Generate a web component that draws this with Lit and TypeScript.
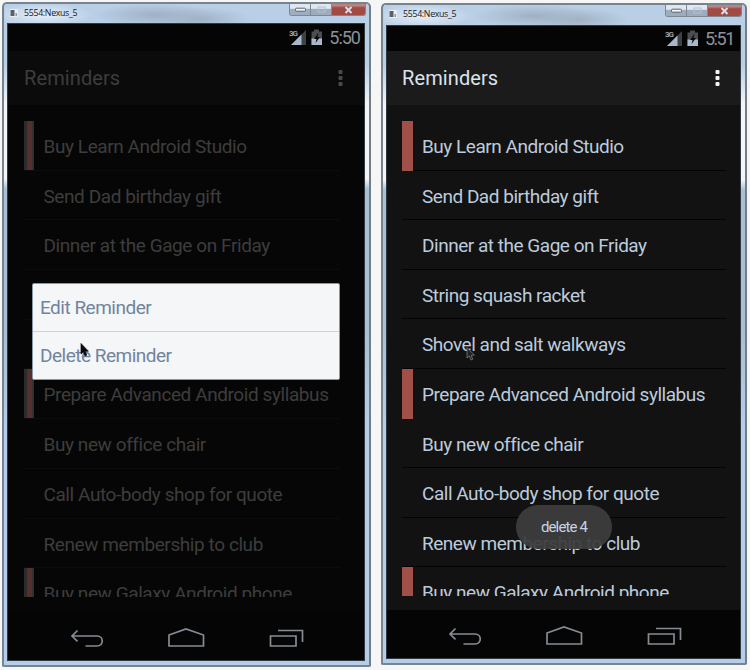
import { LitElement, html, css, svg } from "lit";
import { customElement, property } from "lit/decorators.js";
import { classMap } from "lit/directives/class-map.js";

interface Reminder {
  text: string;
  important?: boolean;
}

const REMINDERS: Reminder[] = [
  { text: "Buy Learn Android Studio", important: true },
  { text: "Send Dad birthday gift" },
  { text: "Dinner at the Gage on Friday" },
  { text: "String squash racket" },
  { text: "Shovel and salt walkways" },
  { text: "Prepare Advanced Android syllabus", important: true },
  { text: "Buy new office chair" },
  { text: "Call Auto-body shop for quote" },
  { text: "Renew membership to club" },
  { text: "Buy new Galaxy Android phone", important: true },
];

const pointer = (fill: string, stroke: string) => svg`
  <path d="M1 0.5 L1 11 L3.4 9 L5 13 L6.8 12.2 L5.2 8.4 L8.4 8.2 Z"
    fill=${fill} stroke=${stroke} stroke-width="0.7" />`;

@customElement("emulator-window")
export class EmulatorWindow extends LitElement {
  @property() time = "";
  @property({ type: Boolean, reflect: true }) dimmed = false;

  static styles = css`
    :host {
      display: flex;
      flex-direction: column;
      box-sizing: border-box;
      width: 369px;
      height: 665px;
      border: 2px solid #77838f;
      border-right-color: #737d88;
      border-radius: 5px 5px 2px 2px;
      padding: 0 4px 4px 3px;
      background: linear-gradient(#b9cfe6 0 60px, #f4f5f7 100px 175px, #a9bfd6 185px 330px, #b4cde8 420px);
      font-family: Roboto, "Liberation Sans", sans-serif;
      position: relative;
    }
    :host(:not([dimmed])) {
      width: 366px;
      height: 662px;
    }
    .titlebar {
      display: flex;
      height: 19px;
      flex: none;
      margin: 0 -3px 0 -2px;
      padding-left: 5px;
      background:
        radial-gradient(ellipse 60px 12px at 150px 11px, #9fb0c3, #9fb0c300),
        radial-gradient(ellipse 50px 12px at 195px 15px, #a2b2c5, #a2b2c500),
        radial-gradient(ellipse 50px 12px at 38px 11px, #e6eef7, #e6eef700),
        #b9cfe6;
    }
    :host(:not([dimmed])) .titlebar {
      height: 20px;
    }
    .appicon {
      flex: none;
      width: 8px;
      height: 8px;
      margin-top: 5px;
    }
    .title {
      font: 8.8px/18px "Open Sans", sans-serif;
      letter-spacing: -0.32px;
      color: #14181c;
      margin-left: 6px;
      flex: 1;
      white-space: nowrap;
    }
    .controls {
      display: flex;
      width: 77px;
      height: 12px;
      margin-right: 2px;
      border: 1px solid #7d8894;
      border-top: 0;
      border-radius: 0 0 3px 3px;
      overflow: hidden;
      box-sizing: border-box;
    }
    .control {
      display: flex;
      align-items: center;
      justify-content: center;
      width: 20px;
      background: linear-gradient(#dfe8f1 0 40%, #9eadbd 45%);
      border-right: 1px solid #7d8894;
    }
    .control.close {
      flex: 1;
      border: 0;
      background: linear-gradient(#b98580 0 15%, #a14b44 35%);
    }
    .screen {
      display: flex;
      flex-direction: column;
      flex: 1;
      min-height: 0;
      background: #121212;
      overflow: hidden;
      outline: 1px solid #303840;
      outline-offset: -1px;
    }
    :host([dimmed]) .screen {
      background: #060606;
    }
    .status {
      display: flex;
      flex: none;
      align-items: center;
      justify-content: flex-end;
      height: 28px;
      padding-right: 5px;
      box-sizing: border-box;
      background: #050505;
    }
    :host(:not([dimmed])) .status {
      height: 26px;
      padding-right: 7px;
    }
    .clock {
      font-size: 18px;
      letter-spacing: -1px;
      color: #8a929b;
      margin-left: 6px;
    }
    :host(:not([dimmed])) .clock {
      letter-spacing: -1.4px;
    }
    .actionbar {
      display: flex;
      flex: none;
      align-items: center;
      height: 54px;
      padding: 0 21px 0 16px;
      background: #1b1b1b;
      color: #dbe3ec;
    }
    :host([dimmed]) .actionbar {
      background: #0b0b0b;
      color: #3d3d3d;
      padding-left: 17px;
      padding-right: 22px;
    }
    .heading {
      flex: 1;
      font-size: 20px;
      letter-spacing: 0.1px;
    }
    .list {
      flex: none;
      height: 475px;
      margin: 16px 15px 0 16px;
      overflow: hidden;
    }
    :host([dimmed]) .list {
      height: 476px;
      margin: 16px 25px 0 17px;
    }
    .row {
      display: flex;
      height: 49.6px;
      box-sizing: border-box;
      border-bottom: 1.6px solid transparent;
      border-image: linear-gradient(#030303, #030303) 1;
    }
    .row:nth-child(6) {
      border-image: none;
    }
    :host([dimmed]) .row {
      height: 49.7px;
      border-image: linear-gradient(#0c0c0c, #0c0c0c) 1;
    }
    .flag {
      width: 11px;
      margin-bottom: -1px;
      flex: none;
    }
    .flag.important {
      background: #a14f49;
    }
    :host([dimmed]) .flag {
      width: 10px;
      margin-bottom: 0;
    }
    :host([dimmed]) .flag.important {
      background: linear-gradient(90deg, #2b2b2b 0 25%, #542f2d 30% 80%, #33302f 85%);
    }
    .label {
      margin-left: 9px;
      font-size: 19px;
      line-height: 52px;
      letter-spacing: -0.48px;
      color: #bccbdc;
      white-space: nowrap;
    }
    :host([dimmed]) .label {
      margin-left: 9.5px;
      letter-spacing: -0.42px;
      color: #3d3d3d;
      line-height: 51px;
    }
    .nav {
      display: flex;
      flex: 1;
      background: #050505;
    }
    :host(:not([dimmed])) .nav svg {
      margin: -1px 0 0 -1.5px;
    }
    .gap {
      height: 14px;
      flex: none;
    }
    svg {
      display: block;
      flex: none;
    }
  `;

  render() {
    const dots = this.dimmed ? "#4a4a4a" : "#f2f5f8";
    return html`
      <div class="titlebar">
        <svg class="appicon" viewBox="0 0 8 8">
          <rect width="8" height="8" fill="#e8eef4" />
          <rect x="0.5" y="1" width="4" height="6" fill="#59616a" />
          <rect x="5.5" y="4" width="1.5" height="3" fill="#8d969f" />
        </svg>
        <span class="title">5554:Nexus_5</span>
        <div class="controls">
          <div class="control">
            <svg width="11" height="5"><rect x="0.5" y="1.2" width="10" height="3" rx="1" fill="#f2f4f7" stroke="#59616a" /></svg>
          </div>
          <div class="control">
            <svg width="9" height="7"><rect x="1" y="1" width="7" height="5" fill="none" stroke="#b3c0cd" /></svg>
          </div>
          <div class="control close">
            <svg width="9" height="8"><path d="M1.5 1 L7.5 7 M7.5 1 L1.5 7" stroke="#d5e0ec" stroke-width="2" /></svg>
          </div>
        </div>
      </div>
      <div class="screen">
        <div class="status">
          <svg width="34" height="18" viewBox="0 0 34 18">
            <path d="M17 2 V17 H2 Z" fill="#3e4145" />
            <path d="M12.5 6.5 V17 H2 Z" fill="#a9b9ca" />
            <text x="0" y="7.5" font-family="Roboto" font-weight="700" font-size="8" letter-spacing="-1" fill="#9aa3ad">3G</text>
            <path d="M25 1.5 h5 v2 h3 V17 H22.5 V3.5 h2.5 Z" fill="#4a4d51" />
            <path d="M22.5 10.5 H33 V17 H22.5 Z" fill="#a9b9ca" />
            <path d="M29.5 4.5 L25 11 H27.5 L26.5 15 L31 9 H28.5 Z" fill="#0a0a0a" />
          </svg>
          <span class="clock">${this.time}</span>
        </div>
        <div class="actionbar">
          <span class="heading">Reminders</span>
          <svg width="5" height="18" viewBox="0 0 5 18" fill=${dots}>
            <rect x="0.5" y="1" width="4" height="4" rx="1" />
            <rect x="0.5" y="7" width="4" height="4" rx="1" />
            <rect x="0.5" y="13" width="4" height="4" rx="1" />
          </svg>
        </div>
        <div class="list">
          ${REMINDERS.map(
            (r) => html`<div class="row">
              <div class=${classMap({ flag: true, important: !!r.important })}></div>
              <span class="label">${r.text}</span>
            </div>`
          )}
        </div>
        <div class="gap"></div>
        <div class="nav">
          <svg width="355" height="50" viewBox="0 0 355 50" fill="none" stroke="#858c94" stroke-width="1.7">
            <path d="M70.5 19.5 L65 25 L70.5 30.3 M65.5 25 H90 C97 25 97 35 90 35 H78.5" />
            <path d="M162 24 L179 18 L196.500 24 V35 H162 Z" />
            <path d="M263.500 25 H289 V35 H263.500 Z M271 19.500 H295.500 V31" />
          </svg>
        </div>
      </div>
      <slot></slot>
    `;
  }
}

@customElement("app-root")
export class AppRoot extends LitElement {
  static styles = css`
    :host {
      display: flex;
      box-sizing: border-box;
      width: 750px;
      height: 670px;
      padding: 2px 0 0 2px;
      gap: 10px;
      background: #f6f6f7;
      overflow: hidden;
      font-family: Roboto, "Liberation Sans", sans-serif;
    }
    .second {
      margin-top: 1px;
    }
    .menu {
      position: absolute;
      left: 28px;
      top: 279px;
      width: 308px;
      height: 97px;
      box-sizing: border-box;
      border: 1px solid #8998a8;
      border-radius: 2px;
      background: #f5f6f7;
      color: #7084a0;
      font-size: 19px;
      letter-spacing: -0.5px;
    }
    .item {
      height: 48px;
      line-height: 48px;
      box-sizing: border-box;
      padding-left: 7px;
    }
    .item:first-child {
      border-bottom: 1px solid #c3d6e9;
    }
    .toast {
      position: absolute;
      left: 133px;
      top: 500px;
      width: 96px;
      height: 44px;
      border-radius: 22px;
      background: #3d3d3df2;
      color: #c5d3e2;
      font-size: 15px;
      letter-spacing: -0.85px;
      line-height: 45px;
      text-align: center;
    }
    .cursor {
      position: absolute;
      width: 9px;
      height: 14px;
    }
    .dark {
      left: 76px;
      top: 339px;
    }
    .light {
      left: 83px;
      top: 342px;
    }
  `;

  render() {
    return html`
      <emulator-window dimmed time="5:50">
        <div class="menu">
          <div class="item">Edit Reminder</div>
          <div class="item">Delete Reminder</div>
        </div>
        <svg class="cursor dark" viewBox="0 0 9 14">${pointer("#0a0a0a", "#0a0a0a")}</svg>
      </emulator-window>
      <emulator-window class="second" time="5:51">
        <svg class="cursor light" viewBox="0 0 9 14">${pointer("#222222", "#8b8b8b")}</svg>
        <div class="toast">delete 4</div>
      </emulator-window>
    `;
  }
}
